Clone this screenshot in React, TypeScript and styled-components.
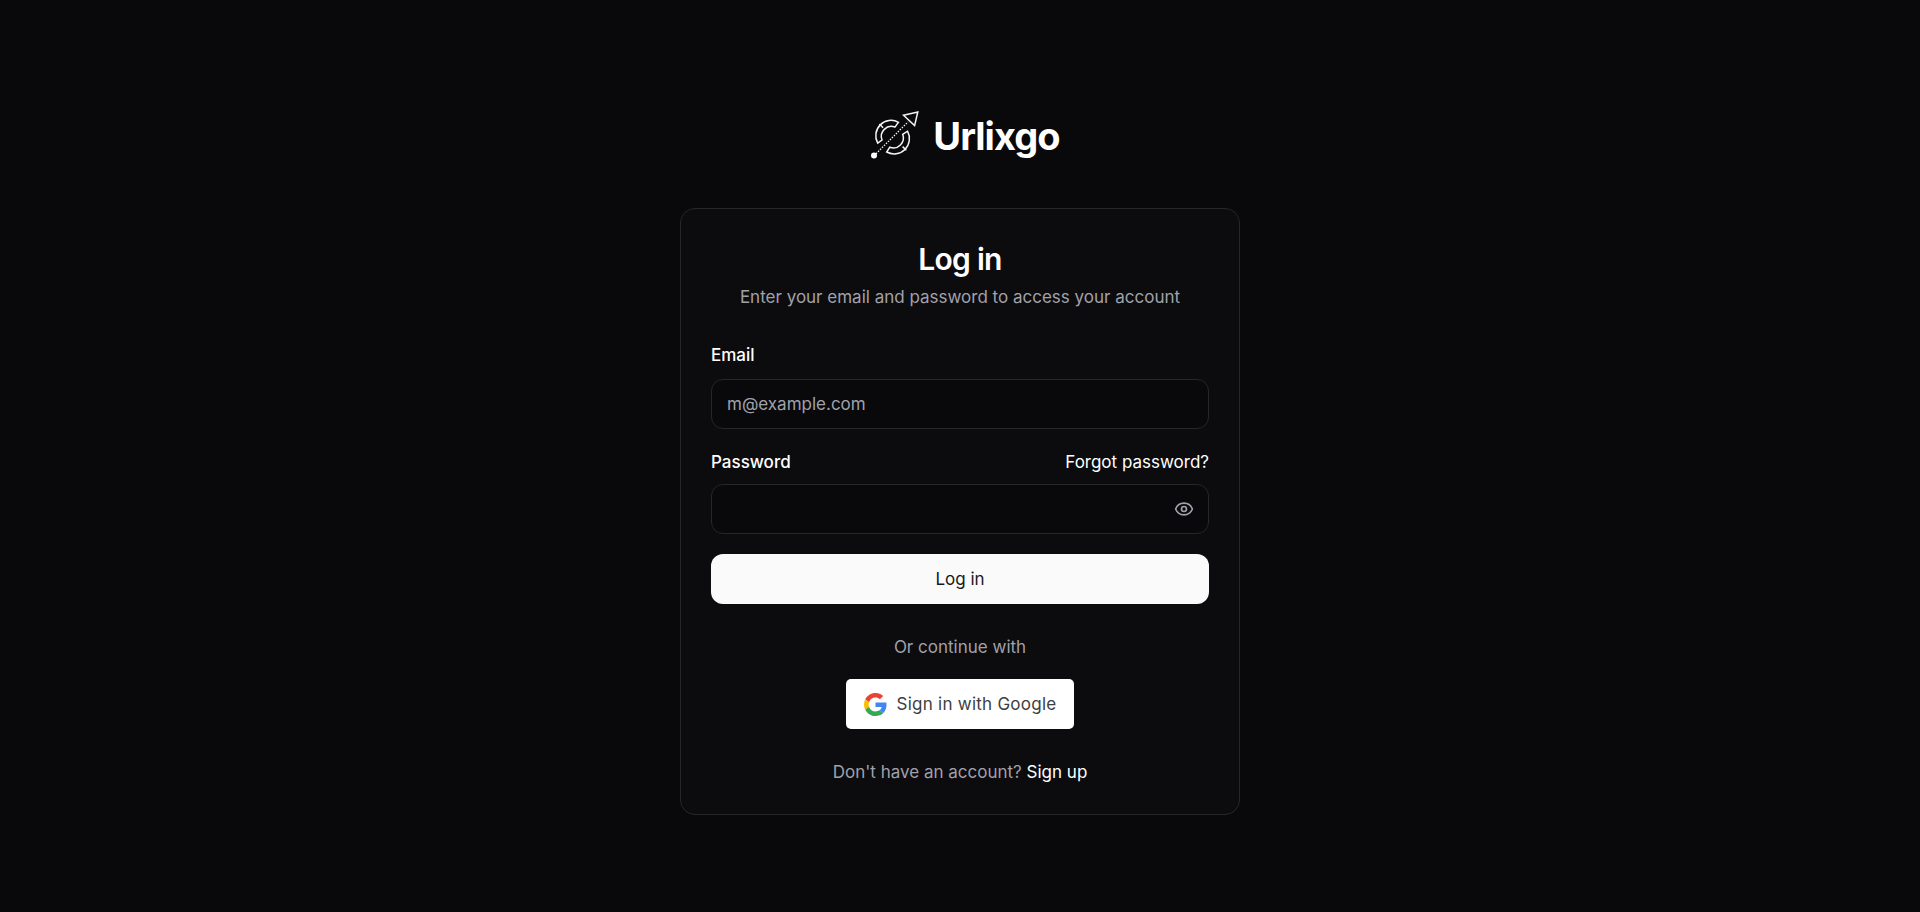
import React, { useState } from "react";
import styled, { createGlobalStyle } from "styled-components";
import { Eye, EyeOff } from "lucide-react";

const GlobalStyle = createGlobalStyle`
  *, *::before, *::after { box-sizing: border-box; }
  body {
    margin: 0;
    background: #09090b;
    color: #fff;
    font-family: Inter, "Liberation Sans", sans-serif;
    font-size: 17px;
    line-height: 27px;
  }
  button, input { font: inherit; }
  h1, p { margin: 0; }
`;

const Page = styled.main`
  min-height: 100vh;
  display: flex;
  flex-direction: column;
  align-items: center;
  justify-content: center;
  gap: 31px;
  padding: 20px;
`;

const Brand = styled.div`
  display: flex;
  align-items: center;
  gap: 13px;
  height: 80px;
  padding-bottom: 2px;
  font-size: 38px;
  font-weight: 700;
  line-height: 45px;
  letter-spacing: -0.025em;
`;

const Card = styled.section`
  width: 100%;
  max-width: 560px;
  padding: 30px 30px 28px;
  border: 1px solid #27272a;
  border-radius: 15px;
  background: #0c0c0e;
`;

const CardHeader = styled.header`
  display: flex;
  flex-direction: column;
  gap: 5px;
  margin-bottom: 31px;
  text-align: center;
`;

const Title = styled.h1`
  font-size: 30px;
  font-weight: 600;
  line-height: 40px;
  letter-spacing: -0.025em;
`;

const Muted = styled.p`
  color: #a1a1aa;
  text-align: center;
`;

const Form = styled.form`
  display: flex;
  flex-direction: column;
  gap: 20px;
`;

const Field = styled.div<{ $gap: number }>`
  display: flex;
  flex-direction: column;
  gap: ${({ $gap }) => $gap}px;
`;

const FieldHead = styled.div`
  display: flex;
  align-items: center;
  justify-content: space-between;
`;

const Label = styled.label`
  font-weight: 500;
`;

const TextLink = styled.a`
  color: #fff;
  text-decoration: none;
  &:hover { text-decoration: underline; }
`;

const InputWrap = styled.div`
  position: relative;
  display: flex;
`;

const Input = styled.input`
  width: 100%;
  height: 50px;
  padding: 0 15px;
  border: 1px solid #27272a;
  border-radius: 12px;
  outline: none;
  background: #09090b;
  color: #fff;
  &::placeholder { color: #a1a1aa; opacity: 1; }
  &:focus-visible { border-color: #71717a; }
`;

const Reveal = styled.button`
  position: absolute;
  top: 0;
  right: 0;
  height: 100%;
  display: flex;
  align-items: center;
  padding: 0 15px;
  border: 0;
  background: transparent;
  color: #a1a1aa;
  cursor: pointer;
`;

const SubmitButton = styled.button`
  height: 50px;
  border: 0;
  border-radius: 12px;
  background: #fafafa;
  color: #18181b;
  cursor: pointer;
`;

const Alternatives = styled.div`
  display: flex;
  flex-direction: column;
  align-items: center;
  gap: 18px;
  margin: 30px 0;
`;

const GoogleButton = styled.button`
  display: flex;
  align-items: center;
  gap: 10px;
  height: 50px;
  padding: 0 18px;
  border: 0;
  border-radius: 5px;
  background: #fff;
  color: #3c4043;
  letter-spacing: 0.25px;
  cursor: pointer;
`;

function BrandMark() {
  return (
    <svg width="60" height="60" viewBox="0 -2 60 60" fill="none" stroke="#f4f4f5" strokeWidth="1.5" aria-hidden="true">
      <path d="M38.5 14.3A15.3 15.3 0 0 0 17.7 35.1L22 32A10 10 0 0 1 34.9 19.1Z" />
      <path d="M19.4 16L23.1 19.7M42.6 38.6L46.3 42.3" />
      <path d="M47.5 23.2A15.3 15.3 0 0 1 26.7 44L29.8 39.2A10 10 0 0 0 42.7 26.3Z" />
      <path d="M14 47.7L48 14" strokeWidth="1.3" strokeDasharray="1.5 1.3" />
      <path d="M43.5 7.2L57.8 4L54.6 17.6Z" />
      <circle cx="14" cy="47.5" r="3" fill="#fff" stroke="none" />
    </svg>
  );
}

function GoogleMark() {
  return (
    <svg width="23" height="23" viewBox="0 0 48 48" aria-hidden="true">
      <path fill="#EA4335" d="M24 9.5c3.54 0 6.71 1.22 9.21 3.6l6.85-6.85C35.9 2.38 30.47 0 24 0 14.62 0 6.51 5.38 2.56 13.22l7.98 6.19C12.43 13.72 17.74 9.5 24 9.5z" />
      <path fill="#4285F4" d="M46.98 24.55c0-1.57-.15-3.09-.38-4.55H24v9.02h12.94c-.58 2.96-2.26 5.48-4.78 7.18l7.73 6c4.51-4.18 7.09-10.36 7.09-17.65z" />
      <path fill="#FBBC05" d="M10.53 28.59c-.48-1.45-.76-2.99-.76-4.59s.27-3.14.76-4.59l-7.98-6.19C.92 16.46 0 20.12 0 24c0 3.88.92 7.54 2.56 10.78l7.97-6.19z" />
      <path fill="#34A853" d="M24 48c6.48 0 11.93-2.13 15.89-5.81l-7.73-6c-2.15 1.45-4.92 2.3-8.16 2.3-6.26 0-11.57-4.22-13.47-9.91l-7.98 6.19C6.51 42.62 14.62 48 24 48z" />
    </svg>
  );
}

export default function App() {
  const [visible, setVisible] = useState(false);
  const RevealIcon = visible ? EyeOff : Eye;

  return (
    <>
      <GlobalStyle />
      <Page>
        <Brand>
          <BrandMark />
          <span>Urlixgo</span>
        </Brand>
        <Card>
          <CardHeader>
            <Title>Log in</Title>
            <Muted>Enter your email and password to access your account</Muted>
          </CardHeader>
          <Form onSubmit={(event) => event.preventDefault()}>
            <Field $gap={10}>
              <Label htmlFor="email">Email</Label>
              <Input id="email" type="email" placeholder="m@example.com" />
            </Field>
            <Field $gap={8}>
              <FieldHead>
                <Label htmlFor="password">Password</Label>
                <TextLink href="#forgot">Forgot password?</TextLink>
              </FieldHead>
              <InputWrap>
                <Input id="password" type={visible ? "text" : "password"} />
                <Reveal
                  type="button"
                  aria-label={visible ? "Hide password" : "Show password"}
                  onClick={() => setVisible(!visible)}
                >
                  <RevealIcon size={20} />
                </Reveal>
              </InputWrap>
            </Field>
            <SubmitButton type="submit">Log in</SubmitButton>
          </Form>
          <Alternatives>
            <Muted>Or continue with</Muted>
            <GoogleButton type="button">
              <GoogleMark />
              Sign in with Google
            </GoogleButton>
          </Alternatives>
          <Muted>
            Don't have an account? <TextLink href="#signup">Sign up</TextLink>
          </Muted>
        </Card>
      </Page>
    </>
  );
}
